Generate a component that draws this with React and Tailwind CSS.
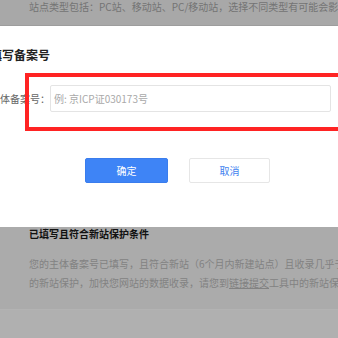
import React from 'react';

const font = { fontFamily: '"Noto Sans CJK SC", "Noto Sans", sans-serif' };

export default function App() {
  return (
    <div
      className="relative w-[338px] h-[338px] overflow-hidden bg-[#ababab]"
      style={font}
    >
      {/* page behind the overlay */}
      <div className="h-[26px] pl-[29px] border-b border-[#9d9d9d] bg-[#a8a8a8]">
        <p className="text-[10px] leading-[14px] text-[#747474] whitespace-nowrap">
          站点类型包括：PC站、移动站、PC/移动站，选择不同类型有可能会影响网站的展现
        </p>
      </div>

      {/* dialog */}
      <div className="relative -ml-[10px] w-[375px] h-[201px] bg-white pt-[21px]">
        <h2 className="text-[12px] leading-[16px] font-bold text-[#222] whitespace-nowrap">
          填写备案号
        </h2>

        <div className="flex items-center mt-[22px] h-[27px]">
          <span className="w-[58px] text-[10px] text-[#666] whitespace-nowrap">主体备案号：</span>
          <div className="ml-[2px] w-[281px] h-[27px] border border-[#e4e4e4] rounded-[2px] flex items-center pl-[3px]">
            <span className="text-[10px] text-[#a9a9a9] whitespace-nowrap">例: 京ICP证030173号</span>
          </div>
        </div>

        {/* annotation box */}
        <div className="absolute left-[35px] top-[47px] w-[480px] h-[58px] border-4 border-[#ff2323]" />

        <div className="flex pl-[95px] gap-[21px] mt-[46px]">
          <button className="w-[83px] h-[25px] rounded-[2px] bg-[#3e84f6] border border-[#3a7ded] text-white text-[10px]">
            确定
          </button>
          <button className="w-[81px] h-[25px] rounded-[2px] bg-white border border-[#e6e6e6] text-[#3f7fef] text-[10px]">
            取消
          </button>
        </div>
      </div>

      <div className="pl-[29px]">
        <p className="text-[10px] leading-[14px] font-bold text-[#111] whitespace-nowrap">
          已填写且符合新站保护条件
        </p>
        <div className="mt-[13px] text-[10px] leading-[19px] text-[#828282] whitespace-nowrap">
          <p>您的主体备案号已填写，且符合新站（6个月内新建站点）且收录几乎于零的条件</p>
          <p>
            的新站保护，加快您网站的数据收录，请您到<span className="underline">链接提交</span>工具中的新站保护
          </p>
        </div>
      </div>
      <div className="mt-[17px] border-t border-[#b3b3b3] h-full bg-[#b0b0b0]" />
    </div>
  );
}
